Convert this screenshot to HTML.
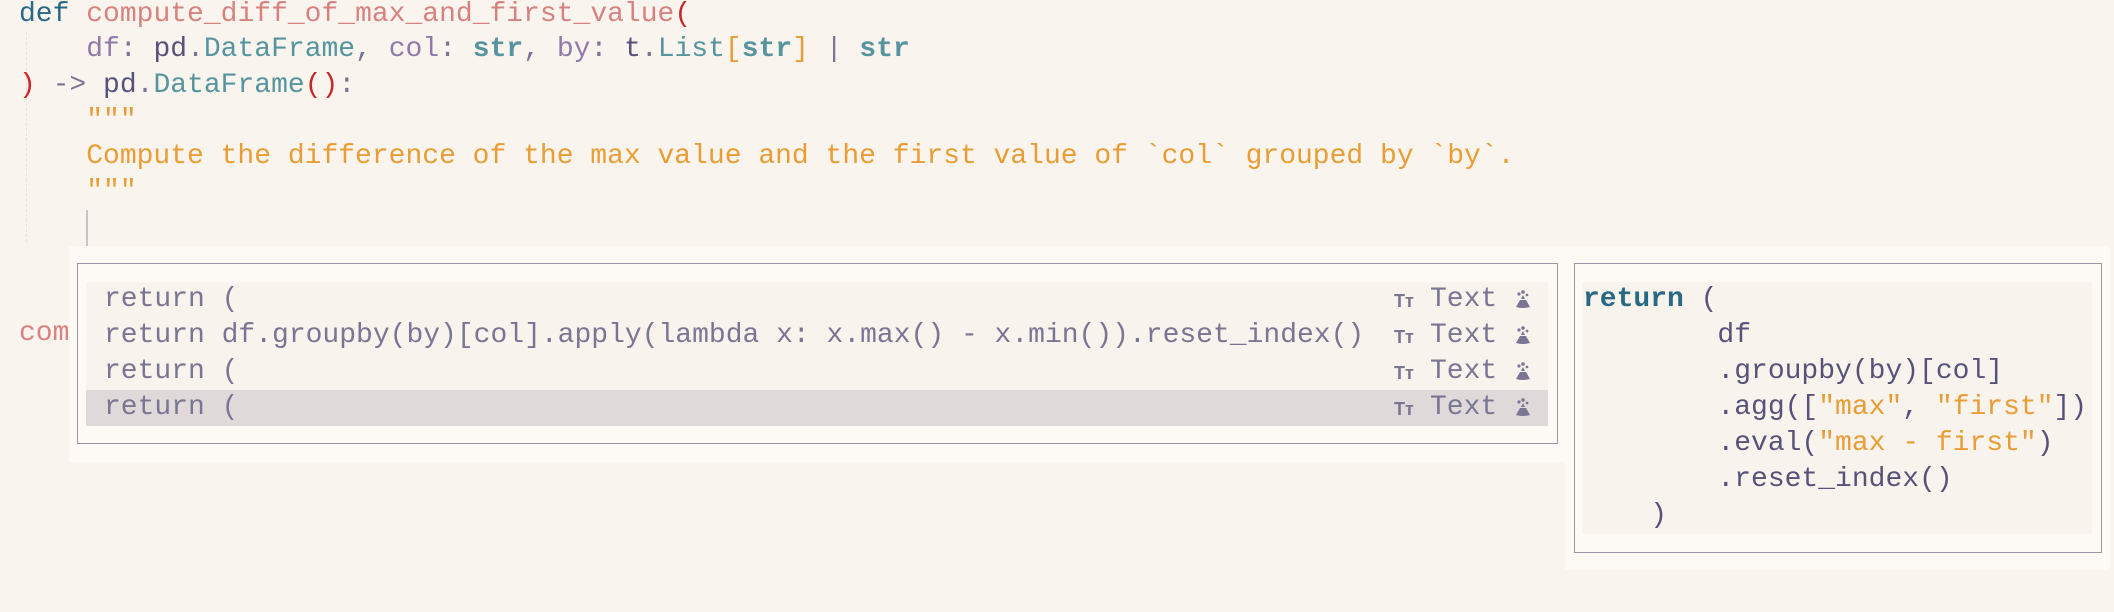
<!DOCTYPE html>
<html><head><meta charset="utf-8"><style>
*{margin:0;padding:0;box-sizing:border-box}
body{width:2114px;height:612px;background:#f9f4ee;position:relative;overflow:hidden;font-family:"Liberation Mono",monospace;font-size:28px}
.l{position:absolute;left:19px;height:36px;line-height:36px;white-space:pre}
.k{color:#286983}.fn{color:#d7827e}.p{color:#907aa9}.t{color:#575279}.f{color:#56949f}.b{font-weight:bold}.g{color:#ea9d34}.r{color:#c8262a}.s{color:#797593}
.guide{position:absolute;left:26px;top:32px;width:0;height:210px;border-left:1px dashed #e8e2da}
.cur{position:absolute;left:86px;top:210px;width:2px;height:36px;background:#c9c4c4}
.pop{position:absolute;left:69px;top:246px;width:1496px;height:216px;background:#fdf9f4}
.box{position:absolute;left:77px;top:263px;width:1481px;height:181px;border:1.5px solid #9a95a6}
.list{position:absolute;left:86px;top:282px;width:1462px;height:144px;background:#f8f3ed}
.row{position:absolute;left:0;width:1462px;height:36px;line-height:36px;color:#797593;white-space:pre}
.row .tx{position:absolute;left:18px}
.row .ic{position:absolute;left:1308px;top:10px;font-size:18px;line-height:18px;font-weight:bold;font-family:"Liberation Sans",sans-serif}
.row .kd{position:absolute;left:1344px}
.row svg{position:absolute;left:1428px;top:8px}
.sel{background:#dfdad9}
.rp{position:absolute;left:1565px;top:246px;width:545px;height:324px;background:#fdf9f4}
.rbox{position:absolute;left:1574px;top:263px;width:528px;height:290px;border:1.5px solid #9a95a6}
.rin{position:absolute;left:1582px;top:282px;width:510px;height:252px;background:#f8f3ed}
.rl{position:absolute;left:1583px;height:36px;line-height:36px;white-space:pre;color:#575279}
</style></head><body>
<div class="guide"></div>
<div class="l" style="top:-3px"><span class="k">def</span> <span class="fn">compute_diff_of_max_and_first_value</span><span class="r">(</span></div>
<div class="l" style="top:32px">    <span class="p">df</span><span class="s">:</span> <span class="t">pd</span><span class="s">.</span><span class="f">DataFrame</span><span class="s">,</span> <span class="p">col</span><span class="s">:</span> <span class="f b">str</span><span class="s">,</span> <span class="p">by</span><span class="s">:</span> <span class="t">t</span><span class="s">.</span><span class="f">List</span><span class="g">[</span><span class="f b">str</span><span class="g">]</span> <span class="s">|</span> <span class="f b">str</span></div>
<div class="l" style="top:68px"><span class="r">)</span> <span class="s">-&gt;</span> <span class="t">pd</span><span class="s">.</span><span class="f">DataFrame</span><span class="r">()</span><span class="s">:</span></div>
<div class="l g" style="top:103px">    """</div>
<div class="l g" style="top:139px">    Compute the difference of the max value and the first value of `col` grouped by `by`.</div>
<div class="l g" style="top:174px">    """</div>
<div class="cur"></div>
<div class="l fn" style="top:316px">com</div>

<div class="pop"></div>
<div class="box"></div>
<div class="list">
<div class="row" style="top:0"><span class="tx">return (</span><span class="ic">Tт</span><span class="kd">Text</span><svg width="18" height="20" viewBox="0 0 18 20"><circle cx="5" cy="4" r="1.6" fill="#797593"/><circle cx="9" cy="2" r="1.8" fill="#797593"/><circle cx="13" cy="5" r="1.4" fill="#797593"/><path d="M9 5 L7 9 L11 9 Z M6 10 L12 10 L16 17 Q9 19 2 17 Z" fill="#797593"/></svg></div>
<div class="row" style="top:36px"><span class="tx">return df.groupby(by)[col].apply(lambda x: x.max() - x.min()).reset_index()</span><span class="ic">Tт</span><span class="kd">Text</span><svg width="18" height="20" viewBox="0 0 18 20"><circle cx="5" cy="4" r="1.6" fill="#797593"/><circle cx="9" cy="2" r="1.8" fill="#797593"/><circle cx="13" cy="5" r="1.4" fill="#797593"/><path d="M9 5 L7 9 L11 9 Z M6 10 L12 10 L16 17 Q9 19 2 17 Z" fill="#797593"/></svg></div>
<div class="row" style="top:72px"><span class="tx">return (</span><span class="ic">Tт</span><span class="kd">Text</span><svg width="18" height="20" viewBox="0 0 18 20"><circle cx="5" cy="4" r="1.6" fill="#797593"/><circle cx="9" cy="2" r="1.8" fill="#797593"/><circle cx="13" cy="5" r="1.4" fill="#797593"/><path d="M9 5 L7 9 L11 9 Z M6 10 L12 10 L16 17 Q9 19 2 17 Z" fill="#797593"/></svg></div>
<div class="row sel" style="top:108px"><span class="tx">return (</span><span class="ic">Tт</span><span class="kd">Text</span><svg width="18" height="20" viewBox="0 0 18 20"><circle cx="5" cy="4" r="1.6" fill="#797593"/><circle cx="9" cy="2" r="1.8" fill="#797593"/><circle cx="13" cy="5" r="1.4" fill="#797593"/><path d="M9 5 L7 9 L11 9 Z M6 10 L12 10 L16 17 Q9 19 2 17 Z" fill="#797593"/></svg></div>
</div>

<div class="rp"></div>
<div class="rbox"></div>
<div class="rin"></div>
<div class="rl" style="top:282px"><span class="k b">return</span> (</div>
<div class="rl" style="top:318px">        df</div>
<div class="rl" style="top:354px">        .groupby(by)[col]</div>
<div class="rl" style="top:390px">        .agg([<span class="g">"max"</span>, <span class="g">"first"</span>])</div>
<div class="rl" style="top:426px">        .eval(<span class="g">"max - first"</span>)</div>
<div class="rl" style="top:462px">        .reset_index()</div>
<div class="rl" style="top:498px">    )</div>
</body></html>
